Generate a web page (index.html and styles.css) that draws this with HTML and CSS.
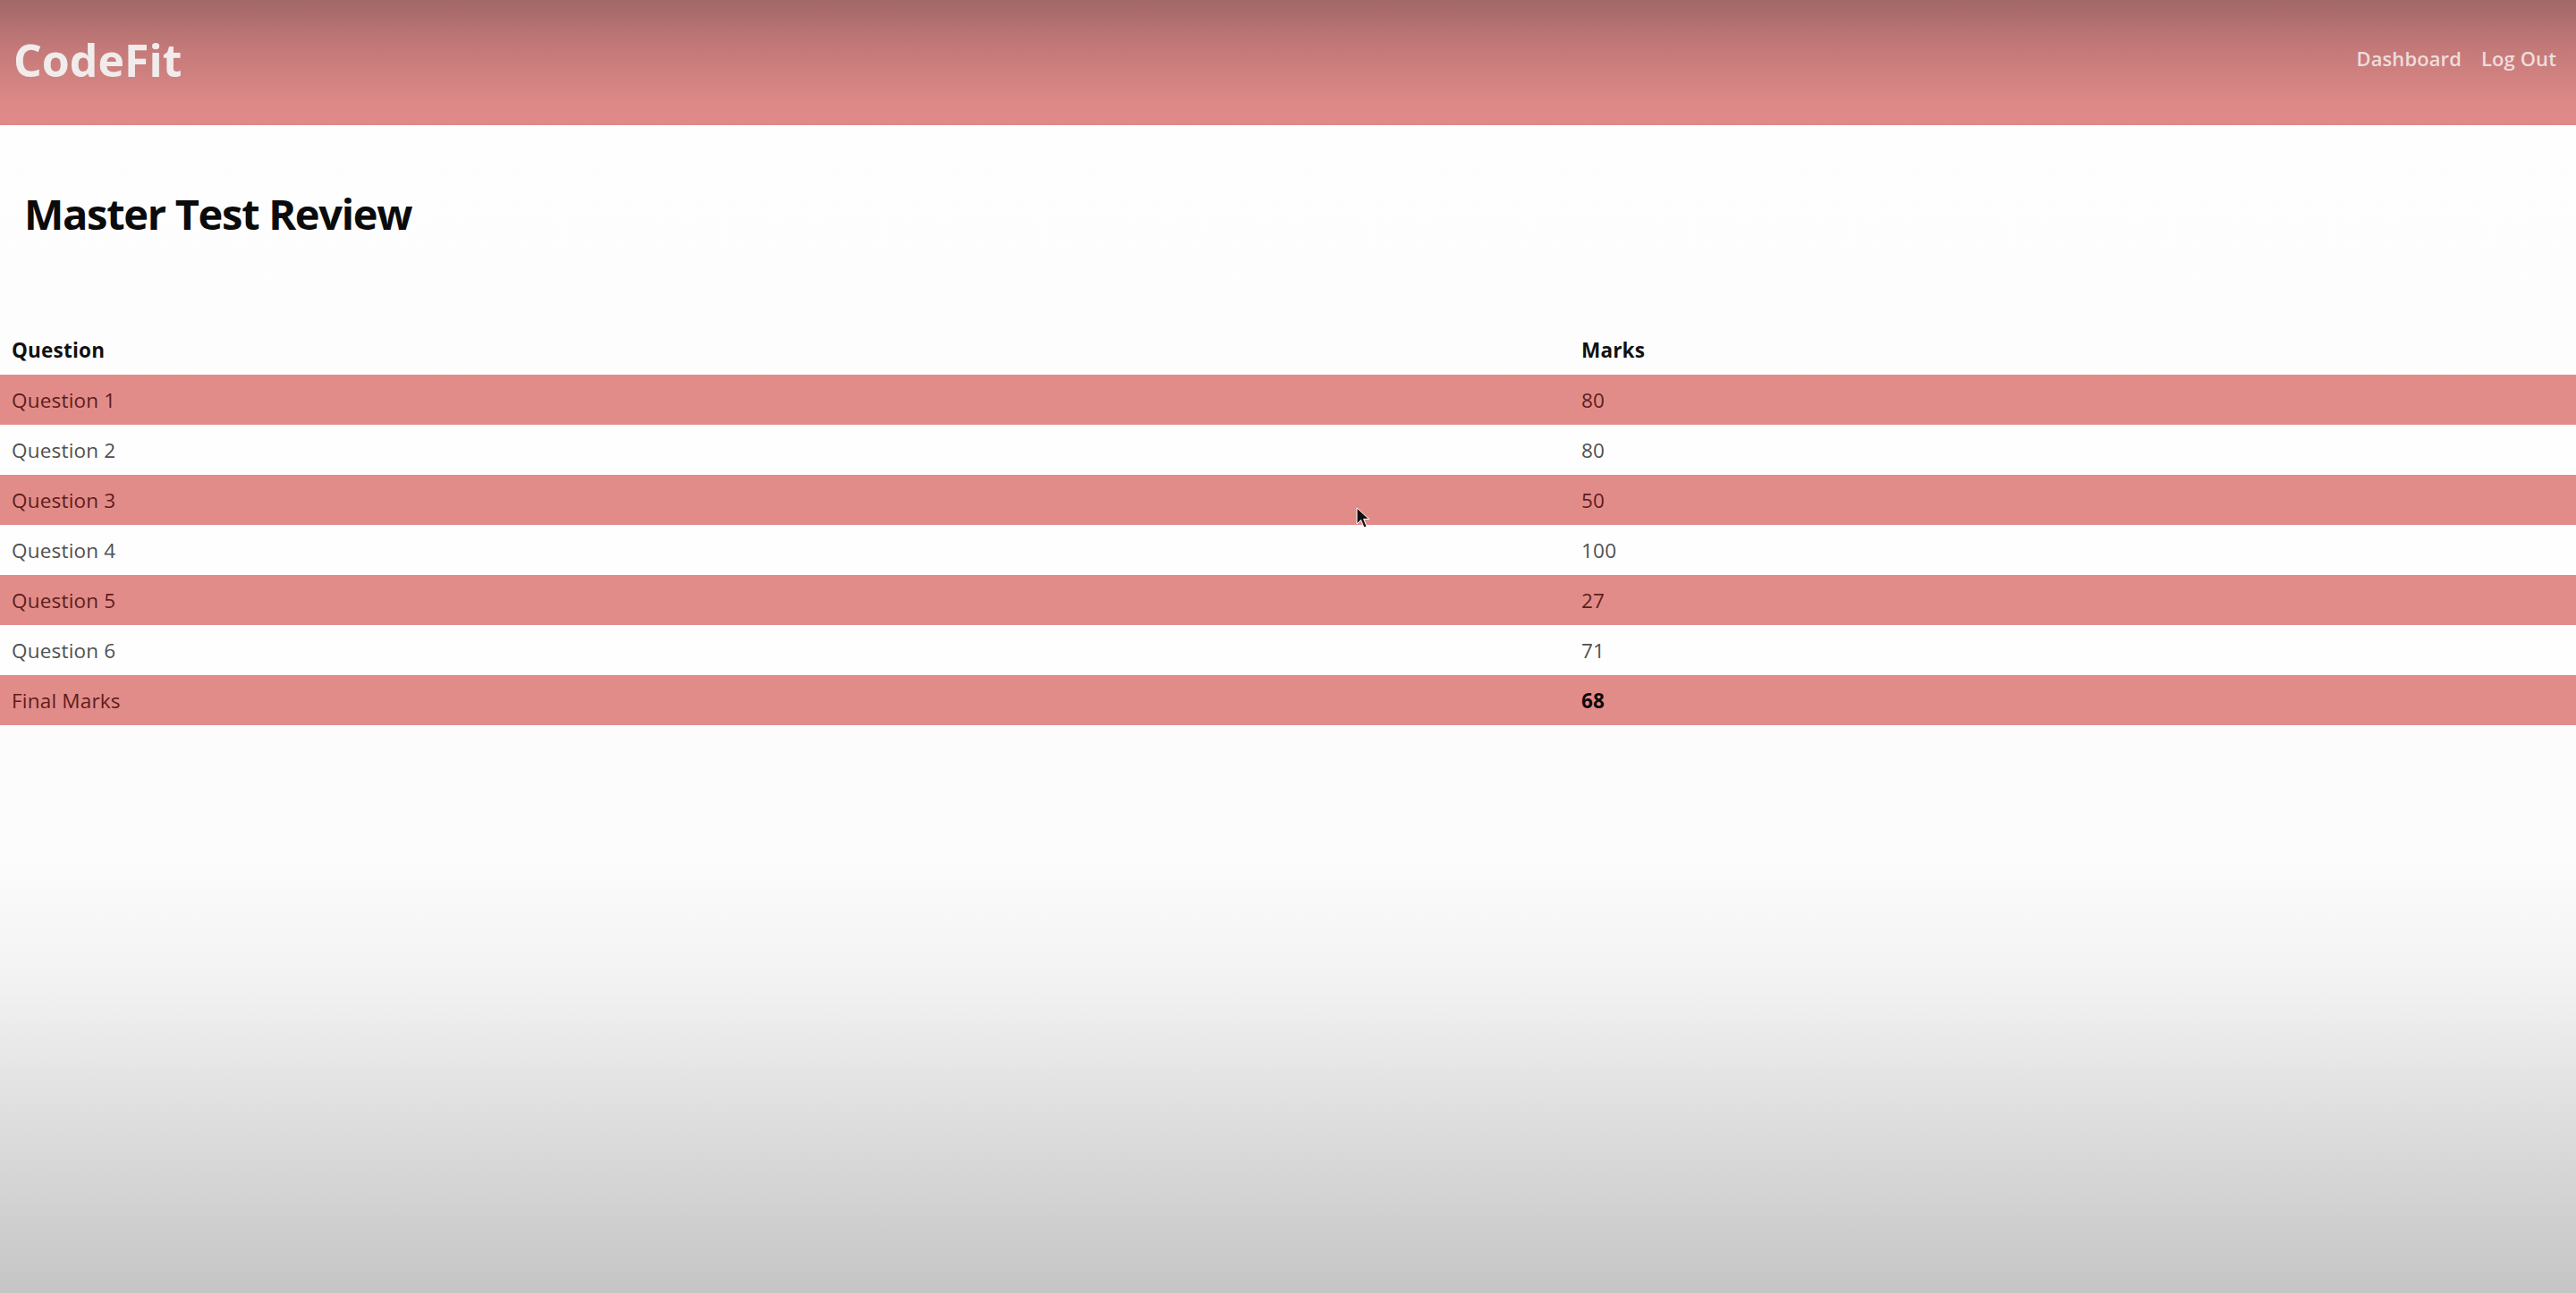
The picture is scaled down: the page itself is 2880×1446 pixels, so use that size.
FILE: index.html
```html
<!DOCTYPE html>
<html lang="en">
<head>
<meta charset="utf-8">
<title>CodeFit - Master Test Review</title>
<link rel="stylesheet" href="styles.css">
</head>
<body>
<header class="topbar">
  <div class="brand">CodeFit</div>
  <nav class="nav">
    <a class="nav-link" href="#">Dashboard</a>
    <a class="nav-link" href="#">Log Out</a>
  </nav>
</header>
<main class="content">
  <h1 class="page-title">Master Test Review</h1>
  <table class="marks-table">
    <colgroup>
      <col class="col-question">
      <col class="col-marks">
    </colgroup>
    <thead>
      <tr class="head-row"><th>Question</th><th>Marks</th></tr>
    </thead>
    <tbody>
      <tr class="row-pink"><td>Question 1</td><td>80</td></tr>
      <tr class="row-white"><td>Question 2</td><td>80</td></tr>
      <tr class="row-pink"><td>Question 3</td><td>50</td></tr>
      <tr class="row-white"><td>Question 4</td><td>100</td></tr>
      <tr class="row-pink"><td>Question 5</td><td>27</td></tr>
      <tr class="row-white"><td>Question 6</td><td>71</td></tr>
      <tr class="row-pink"><td>Final Marks</td><td class="final">68</td></tr>
    </tbody>
  </table>
</main>
<svg class="cursor" width="16" height="26" viewBox="0 0 16 26" aria-hidden="true">
  <path d="M1 1 L1 19 L5.5 14.5 L9 23 L12 21.7 L8.6 13.5 L14.5 13.5 Z" fill="#111" stroke="#fff" stroke-width="1"/>
</svg>
</body>
</html>
```

FILE: styles.css
```css
html, body {
  margin: 0;
  padding: 0;
}
body {
  min-height: 1446px;
  font-family: "Open Sans", "Noto Sans", "Liberation Sans", sans-serif;
  background: linear-gradient(to bottom, #fefefe 0px, #fdfcfd 960px, #f2f2f2 1100px, #dedede 1250px, #c5c5c5 1446px);
  position: relative;
}
.topbar {
  height: 140px;
  box-sizing: border-box;
  display: flex;
  align-items: center;
  justify-content: space-between;
  padding: 0 22px 0 15px;
  background: linear-gradient(to bottom, #a26767 0%, #c47a79 40%, #db8886 80%, #e08b89 100%);
}
.brand {
  color: #f1ecec;
  font-size: 50px;
  font-weight: 700;
  letter-spacing: 0;
  margin-top: -6px;
}
.nav {
  display: flex;
  gap: 22px;
  margin-top: -10px;
}
.nav-link {
  color: #efdcdc;
  text-decoration: none;
  font-size: 22px;
  font-weight: 600;
  letter-spacing: 0.1px;
}
.content {
  padding-top: 64px;
}
.page-title {
  margin: 0 0 0 27px;
  font-size: 47px;
  line-height: 70px;
  font-weight: 700;
  color: #0b0b0b;
  letter-spacing: -1.3px;
}
.marks-table {
  width: 100%;
  border-collapse: collapse;
  margin-top: 89px;
  font-size: 22.5px;
}
.col-question { width: 1755px; }
.marks-table th,
.marks-table td {
  text-align: left;
  padding: 0 13px;
  height: 56px;
  box-sizing: border-box;
  letter-spacing: 0.2px;
}
.marks-table th {
  font-weight: 700;
  color: #111;
}
.row-pink {
  background: #e28c8a;
  color: #5e1c1c;
}
.row-white {
  background: #fefefe;
  color: #505050;
}
.marks-table td.final {
  font-weight: 700;
  color: #0e0808;
}
.cursor {
  position: absolute;
  left: 1516px;
  top: 567px;
}
```
